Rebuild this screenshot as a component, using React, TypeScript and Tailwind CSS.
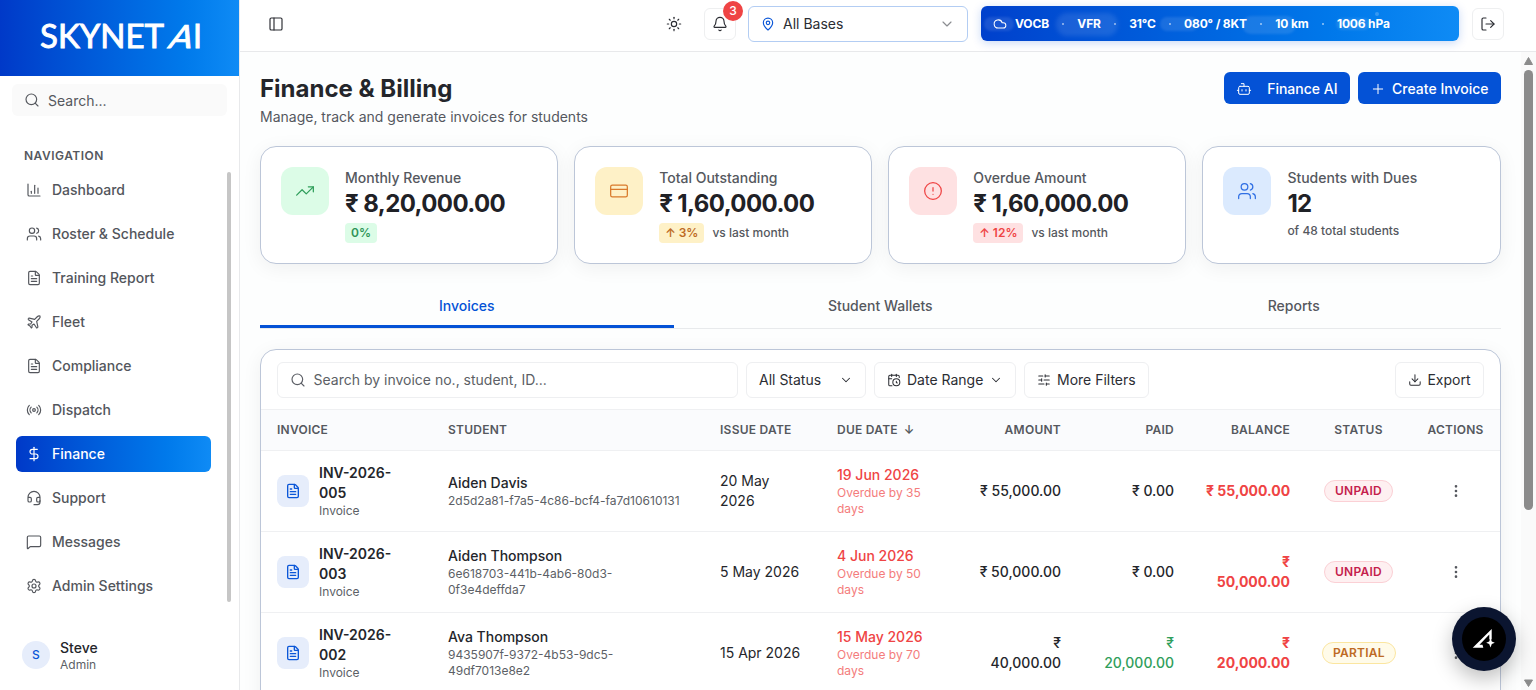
import type { ReactNode } from 'react';
import {
  Bell,
  Bot,
  CalendarClock,
  ChartColumn,
  ChevronDown,
  CircleAlert,
  Cloud,
  CreditCard,
  DollarSign,
  Download,
  EllipsisVertical,
  FileText,
  Headset,
  LogOut,
  MapPin,
  MessageSquare,
  PanelLeft,
  Plane,
  Plus,
  Radio,
  Search,
  Settings,
  SlidersHorizontal,
  Sun,
  TrendingUp,
  Users,
} from 'lucide-react';

const navItems = [
  { label: 'Dashboard', icon: ChartColumn },
  { label: 'Roster & Schedule', icon: Users },
  { label: 'Training Report', icon: FileText },
  { label: 'Fleet', icon: Plane },
  { label: 'Compliance', icon: FileText },
  { label: 'Dispatch', icon: Radio },
  { label: 'Finance', icon: DollarSign, active: true },
  { label: 'Support', icon: Headset },
  { label: 'Messages', icon: MessageSquare },
  { label: 'Admin Settings', icon: Settings },
];

const stats = [
  { label: 'Monthly Revenue', value: '₹ 8,20,000.00', icon: TrendingUp, box: 'bg-[#dcfce7] text-[#2f9e5b]', change: '0%', pill: 'bg-[#dcfce7] text-[#2f9457]', note: '' },
  { label: 'Total Outstanding', value: '₹ 1,60,000.00', icon: CreditCard, box: 'bg-[#fef1c7] text-[#d97a2b]', change: '↑ 3%', pill: 'bg-[#fef1c7] text-[#bd6a24]', note: 'vs last month' },
  { label: 'Overdue Amount', value: '₹ 1,60,000.00', icon: CircleAlert, box: 'bg-[#fee1e2] text-[#ef4444]', change: '↑ 12%', pill: 'bg-[#fee1e2] text-[#ef4444]', note: 'vs last month' },
  { label: 'Students with Dues', value: '12', icon: Users, box: 'bg-[#dbeafe] text-[#2f6fe4]', change: '', pill: '', note: 'of 48 total students' },
];

const invoices = [
  {
    no: ['INV-2026-', '005'],
    student: 'Aiden Davis',
    id: ['2d5d2a81-f7a5-4c86-bcf4-fa7d10610131'],
    issued: ['20 May', '2026'],
    due: '19 Jun 2026',
    overdue: 35,
    amount: ['₹ 55,000.00'],
    paid: ['₹ 0.00'],
    balance: ['₹ 55,000.00'],
    status: 'UNPAID',
  },
  {
    no: ['INV-2026-', '003'],
    student: 'Aiden Thompson',
    id: ['6e618703-441b-4ab6-80d3-', '0f3e4deffda7'],
    issued: ['5 May 2026'],
    due: '4 Jun 2026',
    overdue: 50,
    amount: ['₹ 50,000.00'],
    paid: ['₹ 0.00'],
    balance: ['₹', '50,000.00'],
    status: 'UNPAID',
  },
  {
    no: ['INV-2026-', '002'],
    student: 'Ava Thompson',
    id: ['9435907f-9372-4b53-9dc5-', '49df7013e8e2'],
    issued: ['15 Apr 2026'],
    due: '15 May 2026',
    overdue: 70,
    amount: ['₹', '40,000.00'],
    paid: ['₹', '20,000.00'],
    balance: ['₹', '20,000.00'],
    status: 'PARTIAL',
  },
];

function Lines({ items }: { items: string[] }) {
  return (
    <>
      {items.map((line) => (
        <span key={line} className="block whitespace-nowrap">
          {line}
        </span>
      ))}
    </>
  );
}

function Sidebar() {
  return (
    <aside className="flex w-60 shrink-0 flex-col border-r border-[#e8e9eb] bg-white">
      <div className="flex h-[76px] shrink-0 items-center justify-center bg-gradient-to-r from-[#0039c8] to-[#0f8bf5]">
        <svg width="239" height="76" viewBox="0 0 239 76" fill="white" stroke="white" strokeWidth="0.9" className="font-[Lato,sans-serif]">
          <text x="40" y="47.5" fontSize="32" textLength="124" lengthAdjust="spacingAndGlyphs">SKYNET</text>
          <text transform="translate(167 47.5) skewX(-19)" fontSize="32" textLength="23" lengthAdjust="spacingAndGlyphs">A</text>
          <text x="193" y="47.5" fontSize="32">I</text>
        </svg>
      </div>
      <div className="mx-3 mt-2 flex h-8 shrink-0 items-center gap-2 rounded-md bg-[#fafafa] px-3 text-sm text-[#55585e]">
        <Search className="size-4" strokeWidth={1.75} />
        <span className="pt-px">Search...</span>
      </div>
      <div className="mt-8 px-6 text-xs font-semibold leading-4 tracking-[0.5px] text-[#55585e]">NAVIGATION</div>
      <div className="mt-2 flex h-[430px] shrink-0 justify-between pl-4 pr-2">
        <nav className="flex w-[195px] flex-col gap-2">
          {navItems.map(({ label, icon: Icon, active }) => (
            <a
              key={label}
              className={
                active
                  ? 'flex h-9 shrink-0 items-center gap-2.5 rounded-md bg-gradient-to-r from-[#0039c8] to-[#0f8bf5] px-2.5 text-sm font-medium text-white'
                  : 'flex h-9 shrink-0 items-center gap-2.5 rounded-md px-2.5 text-sm font-medium text-[#53565c]'
              }
            >
              <Icon className="size-4" strokeWidth={1.75} />
              {label}
            </a>
          ))}
        </nav>
        <div className="w-1 rounded-full bg-[#c6c6c6]" />
      </div>
      <div className="mt-auto flex items-start gap-2.5 px-[22px] pb-[17px]">
        <div className="mt-[2px] flex size-7 items-center justify-center rounded-full bg-[#e6edfb] text-xs font-medium text-[#0b57d8]">S</div>
        <div>
          <div className="text-sm font-medium leading-[18px] text-[#24262b]">Steve</div>
          <div className="text-xs leading-4 text-[#5c5f66]">Admin</div>
        </div>
      </div>
    </aside>
  );
}

function Dot() {
  return <span className="mx-[13.2px] size-0.5 rounded-full bg-white/60" />;
}

function WeatherBar() {
  return (
    <div className="relative flex h-[35px] w-[478px] items-center overflow-hidden rounded-md bg-gradient-to-r from-[#0040cc] to-[#0f8bf5] pl-3 text-xs font-bold tracking-[-0.15px] text-white">
      {/* drifting clouds */}
      <span className="absolute left-[3px] top-[11px] h-3.5 w-[30px] rounded-full bg-white/10 blur-[1px]" />
      <span className="absolute left-[75px] top-[7px] h-[23px] w-[62px] rounded-full bg-white/10 blur-[2px]" />
      <span className="absolute left-[179px] top-[11px] h-3.5 w-[38px] rounded-full bg-white/10 blur-[1px]" />
      <span className="absolute left-[261px] top-[10px] h-[18px] w-[54px] rounded-full bg-white/10 blur-[1px]" />
      <span className="absolute left-[355px] top-[12px] h-3 w-[34px] rounded-full bg-white/10 blur-[1px]" />
      <span className="absolute left-[394px] top-[6px] h-1 w-1 rounded-full bg-white/20" />
      <Cloud className="mr-2 size-3.5" strokeWidth={1.75} />
      <span>VOCB</span>
      <Dot />
      <span>VFR</span>
      <Dot />
      <span>31°C</span>
      <Dot />
      <span>080° / 8KT</span>
      <Dot />
      <span>10 km</span>
      <Dot />
      <span>1006 hPa</span>
    </div>
  );
}

function Header() {
  return (
    <header className="flex h-[52px] shrink-0 items-center border-b border-[#e8e9eb] bg-white pb-1 pl-7 pr-8 text-[#2b2d33]">
      <PanelLeft className="size-4" strokeWidth={1.75} />
      <Sun className="ml-auto size-4" strokeWidth={1.75} />
      <div className="relative ml-[22px] flex size-8 items-center justify-center rounded-md border border-[#eeeff0]">
        <Bell className="size-4" strokeWidth={1.75} />
        <span className="absolute -right-2 -top-2 flex size-5 items-center justify-center rounded-full bg-[#ef4444] text-xs font-medium text-white">3</span>
      </div>
      <div className="ml-3 flex h-9 w-[220px] items-center rounded-md border border-[#b3cdf3] px-3 text-sm">
        <MapPin className="mr-2 size-3.5 text-[#0b57d8]" />
        <span>All Bases</span>
        <ChevronDown className="ml-auto size-4 text-[#8b8d91]" strokeWidth={1.75} />
      </div>
      <div className="ml-[13px] rounded-md shadow-[0_2px_10px_rgba(4,82,214,0.22)]">
        <WeatherBar />
      </div>
      <div className="ml-[13px] flex size-8 items-center justify-center rounded-md border border-[#eeeff0]">
        <LogOut className="size-4" strokeWidth={1.75} />
      </div>
    </header>
  );
}

function StatCards() {
  return (
    <div className="mt-[19px] grid grid-cols-4 gap-4">
      {stats.map(({ label, value, icon: Icon, box, change, pill, note }) => (
        <div key={label} className="flex h-[118px] gap-4 rounded-2xl border border-[#bcc6d8] bg-white p-5 shadow-[0_4px_20px_rgba(0,0,0,0.06)]">
          <div className={`flex size-12 shrink-0 items-center justify-center rounded-xl ${box}`}>
            <Icon className="size-5" strokeWidth={1.5} />
          </div>
          <div>
            <div className="pt-px text-sm font-medium text-[#55585e]">{label}</div>
            <div className="whitespace-nowrap text-2xl font-bold leading-8 tracking-tight text-[#1f2126]">{value}</div>
            {change ? (
              <div className="mt-[3px] flex items-center gap-2 text-xs">
                <span className={`flex h-5 items-center rounded px-1.5 font-semibold ${pill}`}>{change}</span>
                <span className="font-medium text-[#55585e]">{note}</span>
              </div>
            ) : (
              <div className="mt-[3px] text-xs font-medium text-[#55585e]">{note}</div>
            )}
          </div>
        </div>
      ))}
    </div>
  );
}

function ToolButton({ children, className }: { children: ReactNode; className?: string }) {
  return (
    <button className={`flex h-9 shrink-0 items-center whitespace-nowrap rounded-md border border-[#eeeff1] px-3 text-sm text-[#2b2d33] ${className ?? ''}`}>
      {children}
    </button>
  );
}

function InvoiceTable() {
  return (
    <div className="mt-5 rounded-2xl border border-[#bcc6d8] bg-white pb-6 shadow-[0_4px_20px_rgba(0,0,0,0.06)]">
      <div className="flex h-[60px] items-center gap-2 border-b border-[#eff0f2] px-4">
        <div className="flex h-9 w-[461px] items-center gap-2 rounded-md border border-[#eeeff1] pl-[11.5px] pr-3 text-sm text-[#5c5f66]">
          <Search className="size-4" strokeWidth={1.75} />
          <span>Search by invoice no., student, ID...</span>
        </div>
        <ToolButton className="w-[120px] justify-between">
          All Status <ChevronDown className="size-3.5" strokeWidth={1.75} />
        </ToolButton>
        <ToolButton className="w-[142px] gap-1.5">
          <CalendarClock className="size-3.5 shrink-0" strokeWidth={1.75} /> Date Range{' '}
          <ChevronDown className="size-3.5 shrink-0" strokeWidth={1.75} />
        </ToolButton>
        <ToolButton className="w-[125px] gap-1.5">
          <SlidersHorizontal className="size-3.5" strokeWidth={1.75} /> More Filters
        </ToolButton>
        <ToolButton className="ml-auto w-[89px] gap-1.5">
          <Download className="size-3.5" strokeWidth={1.75} /> Export
        </ToolButton>
      </div>
      <table className="w-full table-fixed text-sm text-[#24262b]">
        <colgroup>
          <col className="w-[171px]" />
          <col className="w-[272px]" />
          <col className="w-[117px]" />
          <col className="w-[133px]" />
          <col className="w-[123px]" />
          <col className="w-[113px]" />
          <col className="w-[116px]" />
          <col className="w-[105px]" />
          <col className="w-[89px]" />
        </colgroup>
        <thead>
          <tr className="h-10 border-b border-[#eff0f2] bg-[#fafbfd] text-left text-xs tracking-[0.25px] text-[#55585e] [&>th]:whitespace-nowrap [&>th]:px-4 [&>th]:font-semibold">
            <th>INVOICE</th>
            <th>STUDENT</th>
            <th>ISSUE DATE</th>
            <th>
              DUE DATE<span className="ml-1.5">↓</span>
            </th>
            <th className="text-right">AMOUNT</th>
            <th className="text-right">PAID</th>
            <th className="text-right">BALANCE</th>
            <th className="text-center">STATUS</th>
            <th className="text-center">ACTIONS</th>
          </tr>
        </thead>
        <tbody>
          {invoices.map((inv) => (
            <tr key={inv.student} className="h-[81px] border-b border-[#eff0f2] [&>td]:px-4">
              <td>
                <div className="flex items-center gap-2.5">
                  <span className="flex size-8 shrink-0 items-center justify-center rounded-lg bg-[#e6edfb] text-[#0b57d8]">
                    <FileText className="size-4" />
                  </span>
                  <div>
                    <div className="font-semibold">
                      <Lines items={inv.no} />
                    </div>
                    <div className="text-xs text-[#5c5f66]">Invoice</div>
                  </div>
                </div>
              </td>
              <td>
                <div className="font-medium">{inv.student}</div>
                <div className="text-xs text-[#5c5f66]">
                  <Lines items={inv.id} />
                </div>
              </td>
              <td>
                <Lines items={inv.issued} />
              </td>
              <td className="text-[#ef4444]">
                <div className="font-medium">{inv.due}</div>
                <div className="text-xs text-[#f47c7c]">
                  <Lines items={[`Overdue by ${inv.overdue}`, 'days']} />
                </div>
              </td>
              <td className="text-right font-medium">
                <Lines items={inv.amount} />
              </td>
              <td className={inv.status === 'PARTIAL' ? 'text-right font-medium text-[#2f9e5b]' : 'text-right font-medium'}>
                <Lines items={inv.paid} />
              </td>
              <td className="text-right font-bold text-[#ef4444]">
                <Lines items={inv.balance} />
              </td>
              <td className="text-center">
                <span
                  className={
                    inv.status === 'PARTIAL'
                      ? 'inline-flex h-[22px] items-center rounded-full border border-[#fbe6a0] bg-[#fffbe9] px-2.5 text-xs font-semibold tracking-[0.25px] text-[#bd6a24]'
                      : 'inline-flex h-[22px] items-center rounded-full border border-[#fbd0d5] bg-[#fef0f1] px-2.5 text-xs font-semibold tracking-[0.25px] text-[#c51d4c]'
                  }
                >
                  {inv.status}
                </span>
              </td>
              <td>
                <EllipsisVertical className="mx-auto size-4 text-[#55585e]" />
              </td>
            </tr>
          ))}
        </tbody>
      </table>
    </div>
  );
}

function PageScrollbar() {
  return (
    <div className="flex w-[15px] shrink-0 flex-col items-center bg-[#fafafa]">
      <svg width="15" height="18" viewBox="0 0 15 18" fill="#8b8b8b">
        <path d="M7.5 5.5 11.5 12.5h-8z" stroke="#8b8b8b" strokeLinejoin="round" />
      </svg>
      <div className="h-[440px] w-[9px] rounded-full bg-[#8b8b8b]" />
      <svg className="mt-auto" width="15" height="15" viewBox="0 0 15 15" fill="#8b8b8b">
        <path d="M7.5 11.5 3.5 5h8z" stroke="#8b8b8b" strokeLinejoin="round" />
      </svg>
    </div>
  );
}

export default function App() {
  return (
    <div className="relative flex h-[690px] w-[1536px] overflow-hidden bg-white font-[Inter,sans-serif]">
      <Sidebar />
      <div className="flex min-w-0 flex-1 flex-col">
        <Header />
        <div className="flex min-h-0 flex-1">
          <main className="min-w-0 flex-1 overflow-hidden bg-[#fdfefe] py-5 pl-5 pr-[20.5px]">
            <div className="flex items-start justify-between">
              <div>
                <h1 className="pt-px text-2xl font-bold leading-8 text-[#24262b]">Finance &amp; Billing</h1>
                <p className="mt-[2px] text-sm text-[#55585e]">Manage, track and generate invoices for students</p>
              </div>
              <div className="flex gap-2 text-sm font-medium text-white">
                <button className="flex h-8 w-[126px] items-center justify-between rounded-md bg-[#0452d6] px-3 pt-px">
                  <Bot className="size-4" strokeWidth={1.5} /> Finance AI
                </button>
                <button className="flex h-8 w-[143px] items-center justify-between rounded-md bg-[#0452d6] px-3 pt-px">
                  <Plus className="size-4" strokeWidth={1.5} /> Create Invoice
                </button>
              </div>
            </div>
            <StatCards />
            <div className="mt-5 grid h-[45px] grid-cols-3 border-b border-[#e8eaec] text-sm font-medium text-[#55585e]">
              <div className="flex items-center justify-center border-b-[3px] border-[#0452d6] pt-[3px] text-[#0452d6]">Invoices</div>
              <div className="flex items-center justify-center">Student Wallets</div>
              <div className="flex items-center justify-center">Reports</div>
            </div>
            <InvoiceTable />
          </main>
          <PageScrollbar />
        </div>
      </div>
      <div className="absolute bottom-[19px] right-5 flex size-16 items-center justify-center rounded-full bg-[#0b1530] shadow-[0_8px_20px_rgba(0,0,0,0.25)]">
        <div className="flex size-11 items-center justify-center rounded-full bg-black">
          <svg width="24" height="22" viewBox="0 0 24 22" fill="white">
            <path d="M0.7 19.7 L19.7 1 V11.5 H17.3 V6.5 L7.5 16.8 H10.5 L11.3 19.7 Z" />
            <path d="M18.5 10 L19.8 13.4 L22.8 14.7 L19.8 16 L18.5 19.4 L17.2 16 L14.2 14.7 L17.2 13.4 Z" />
          </svg>
        </div>
      </div>
    </div>
  );
}
